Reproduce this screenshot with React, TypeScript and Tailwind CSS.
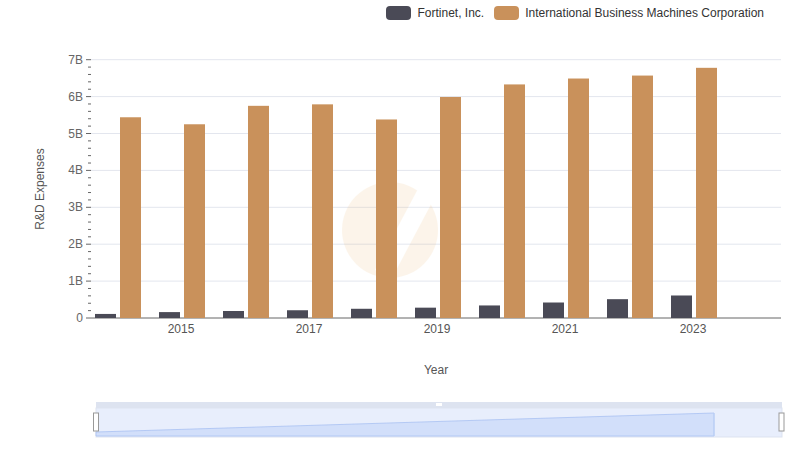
export default function App() {
  const ibm = [5.44, 5.25, 5.75, 5.79, 5.38, 5.99, 6.33, 6.49, 6.57, 6.78];
  const ftnt = [0.11, 0.16, 0.19, 0.21, 0.25, 0.28, 0.34, 0.42, 0.51, 0.61];
  const y0 = 318, per = 36.9;
  const cx = (i: number) => 117 + i * 64;
  const ticks = [];
  for (let k = 0; k <= 35; k++) ticks.push(k);
  return (
    <div className="w-[800px] h-[461px] bg-white flex flex-col" style={{ fontFamily: '"Liberation Sans", Arial, sans-serif' }}>
      <div className="h-[26px] flex items-center justify-end pr-[36px] gap-[10px] text-[12px] text-[#333]">
        <div className="flex items-center gap-[6px]"><span className="w-[25px] h-[14px] rounded-[4px] bg-[#4a4a56]"></span>Fortinet, Inc.</div>
        <div className="flex items-center gap-[6px]"><span className="w-[25px] h-[14px] rounded-[4px] bg-[#c9915b]"></span>International Business Machines Corporation</div>
      </div>
      <svg width="800" height="435" viewBox="0 26 800 435" className="block">
        <g stroke="#777" fill="none" strokeWidth="1">
          <path d="M748 8v10h11v-11h-10M745 11h7" />
          <path d="M779 8h-11v10M768 8l-3 3M776 8v10h-6" />
        </g>
        {[1,2,3,4,5,6,7].map(v => <line key={v} x1="91" x2="781" y1={y0 - v*per} y2={y0 - v*per} stroke="#e3e6ee" />)}
        {ticks.map(k => <line key={k} x1={k%5===0?86:88} x2="91" y1={y0 - k*per/5} y2={y0 - k*per/5} stroke="#666" />)}
        <line x1="91" x2="781" y1={y0} y2={y0} stroke="#666" />
        <g opacity="0.1">
          <circle cx="390" cy="230" r="48" fill="#e8a040" />
          <path d="M375 270 L420 185 L436 195 L392 278 Z" fill="#fff" />
        </g>
        {ibm.map((v, i) => <rect key={'i'+i} x={cx(i)+3} y={y0 - v*per} width="21" height={v*per} fill="#c9915b" />)}
        {ftnt.map((v, i) => <rect key={'f'+i} x={cx(i)-22} y={y0 - v*per} width="21" height={v*per} fill="#4a4a56" />)}
        {[0,1,2,3,4,5,6,7].map(v => <text key={v} x="83" y={y0 - v*per + 4} textAnchor="end" fontSize="12" fill="#666">{v===0?'0':v+'B'}</text>)}
        {[1,3,5,7,9].map(i => <text key={i} x={cx(i)} y="333" textAnchor="middle" fontSize="12" fill="#555">{2014+i}</text>)}
        <text x="436" y="374" textAnchor="middle" fontSize="12" fill="#555">Year</text>
        <text x="44" y="189" textAnchor="middle" fontSize="12" fill="#555" transform="rotate(-90 44 189)">R&amp;D Expenses</text>
        <rect x="96" y="402" width="686" height="6" fill="#dde3f0" />
        <rect x="96" y="408" width="686" height="29" fill="#e8eefc" stroke="#dde3f0" />
        <path d="M96 432 L714 413 L714 436 L96 436 Z" fill="#d2dffa" stroke="#a9c1f2" strokeWidth="0.8" />
        <line x1="714" x2="714" y1="413" y2="436" stroke="#bcd0f5" />
        <rect x="93.5" y="413" width="5" height="18" fill="#fff" stroke="#999" />
        <rect x="779" y="413" width="5" height="18" fill="#fff" stroke="#999" />
        <rect x="436" y="403" width="6" height="3" fill="#fff" />
      </svg>
    </div>
  );
}
